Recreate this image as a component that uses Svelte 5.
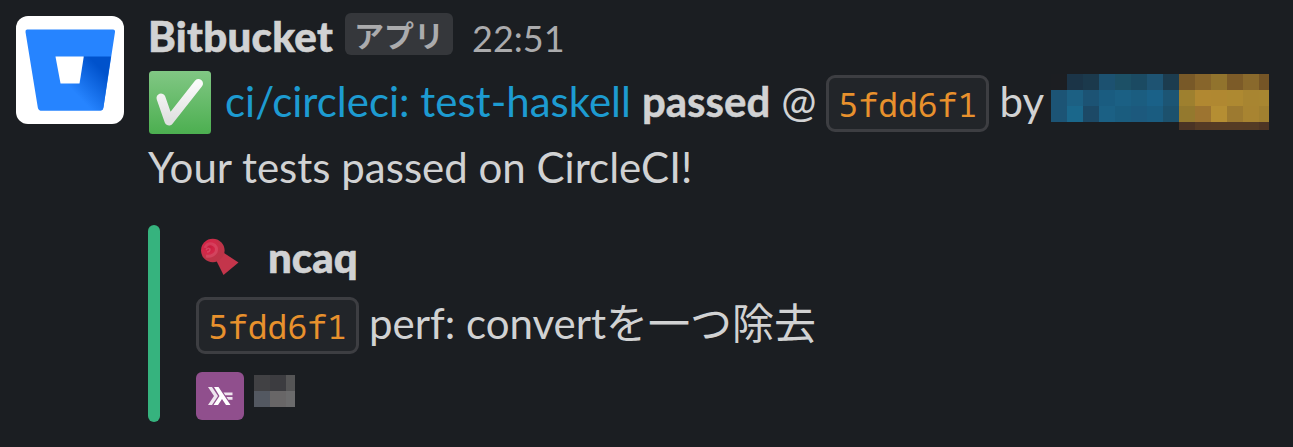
<script>
  const blue = [
    ['#1c1e22', '#1b3447', '#1b394c', '#1c5170', '#1c5066', '#1b4a62', '#1e5372', '#1c3c4f'],
    ['#1c5475', '#1c6083', '#1c5374', '#1a5c80', '#1b6084', '#1b5d80', '#1a6188', '#1c5574'],
    ['#1c5475', '#1a678b', '#1c4966', '#1b6084', '#1a5c7e', '#1c597d', '#1a5c80', '#1c516d']
  ];
  const gold = [
    ['#785928', '#87652b', '#91732d', '#7c5b28', '#89692c', '#755526'],
    ['#9e802f', '#b18831', '#b08831', '#ae8931', '#a88531', '#a88631'],
    ['#94792e', '#9d7430', '#b58e33', '#9d7a30', '#a88431', '#a18030'],
    ['#4a3325', '#553a25', '#553b25', '#553b25', '#543b25', '#4e3525']
  ];
  const gray = [['#414144', '#3c3c40', '#555556'], ['#535861', '#686667', '#6b6b6c']];
</script>

{#snippet mosaic(rows, kind)}
  <svg class="mosaic {kind}" shape-rendering="crispEdges" aria-hidden="true">
    {#each rows as row, y}
      {#each row as color, x}
        <rect x={x * 16} y={y * 16} width="16" height="16" fill={color} />
      {/each}
    {/each}
  </svg>
{/snippet}

<main>
  <svg class="avatar" viewBox="0 0 108 108">
    <defs>
      <linearGradient id="fold" x1="88" y1="45" x2="57" y2="75" gradientUnits="userSpaceOnUse">
        <stop offset=".18" stop-color="#0052cc" /><stop offset="1" stop-color="#2684ff" />
      </linearGradient>
    </defs>
    <rect width="108" height="108" rx="12" fill="#fff" />
    <path d="M11 13.5h86q2.300 0 2 2.500L87.500 91q-.5 3.500-3 3.500H25q-2.700 0-3.200-3L9.500 16q-.3-2.500 1.500-2.500Z" fill="#2684ff" />
    <path d="M67 40.500h28L87.500 91q-.5 3.500-3 3.500H25q-1 0-1.600-.5L45 67h19Z" fill="url(#fold)" />
    <path d="M39.500 40.500H67.800L63.500 67.500H44.500Z" fill="#fff" />
  </svg>
  <section class="body">
    <header class="row">
      <b class="name">Bitbucket</b><span class="badge">アプリ</span><span class="time">22:51</span>
    </header>
    <div class="row status">
      <svg class="check" viewBox="0 0 62 63">
        <defs>
          <linearGradient id="green" x2="0" y2="1"><stop stop-color="#81c784" /><stop offset="1" stop-color="#4caf50" /></linearGradient>
          <linearGradient id="tick" x2="0" y2="1"><stop stop-color="#fafafa" /><stop offset="1" stop-color="#e0e0e0" /></linearGradient>
        </defs>
        <rect width="62" height="63" rx="3.500" fill="url(#green)" />
        <path d="M12 27 20 50 49.500 12.500" fill="none" stroke="url(#tick)" stroke-width="9" stroke-linecap="round" stroke-linejoin="round" />
      </svg>
      <span class="link">ci/circleci: test-haskell</span>
      <b class="passed">passed</b><span class="at">@</span>
      <code>5fdd6f1</code><span class="by">by</span>
      {@render mosaic(blue, 'blue')}{@render mosaic(gold, 'gold')}
    </div>
    <div class="row"><span class="tests">Your tests passed on CircleCI!</span></div>
    <div class="attachment">
      <div class="bar"></div>
      <div class="content">
        <div class="row author">
          <svg class="pin" viewBox="0 0 40 40">
            <defs><radialGradient id="ball" cx=".35" cy=".35"><stop stop-color="#c8193c" /><stop offset=".55" stop-color="#d32849" /><stop offset="1" stop-color="#bd3448" /></radialGradient></defs>
            <path d="M16 22 24 15 38.500 24.500 23.500 37Z" fill="#c4354b" />
            <circle cx="12.800" cy="12.500" r="11.800" fill="url(#ball)" />
            <path d="M5 10Q7 5 12 6 18 8 16 14 13 19 6 18" fill="none" stroke="#df667d" stroke-width="3" opacity=".4" />
            <path d="M6 12Q8 9 10 11 10 14 7 14" fill="none" stroke="#df667d" stroke-width="1.500" opacity=".5" />
          </svg>
          <b class="ncaq">ncaq</b>
        </div>
        <div class="row"><code>5fdd6f1</code><span class="commit">perf: convertを一つ除去</span></div>
        <footer>
          <svg class="repo" viewBox="0 0 48 48">
            <rect width="48" height="48" rx="6" fill="#904f8d" />
            <g fill="#fff"><path d="M12 15h4l6 9-6 9h-4l6-9Z" opacity=".85" /><path d="M18 15h4.500l12 18H30l-4-6-4 6h-4.500l6-9Z" /><path d="M27.500 20.500h9v2.700h-7.200ZM30.500 25h6v2.700h-4.200Z" opacity=".85" /></g>
          </svg>
          {@render mosaic(gray, 'gray')}
        </footer>
      </div>
    </div>
  </section>
</main>

<style>
  :global(body) { margin: 0; background: #1b1e22; }
  main { box-sizing: border-box; width: 1293px; height: 447px; overflow: hidden; display: flex; padding-left: 16px; background: #1b1e22; color: #d1d2d3; font: 42px/66px Lato, "Noto Sans CJK JP", sans-serif; }
  svg { display: block; flex: none; }
  .avatar { width: 108px; height: 108px; margin-top: 16px; }
  .body { margin-left: 25px; padding-top: 3px; }
  .row { display: flex; height: 66px; white-space: nowrap; }
  b { font-weight: 900; }
  .name { margin-left: -1px; letter-spacing: .3px; -webkit-text-stroke: .6px; }
  .badge { box-sizing: border-box; width: 108px; height: 42px; margin: 10px 0 0 12px; border-radius: 6px; background: #35373b; color: #ababad; text-align: center; font: 700 30px/42px "Noto Sans CJK JP", sans-serif; }
  .time { margin-left: 19px; color: #ababad; font-size: 36px; line-height: 70px; }
  .check { width: 62px; height: 63px; margin-top: 2px; }
  .link { margin-left: 14px; color: #1d9bd1; line-height: 65px; }
  .passed { margin-left: 11px; font-weight: 700; line-height: 65px; -webkit-text-stroke: .5px; }
  .at { margin-left: 11px; margin-right: -1px; line-height: 65px; }
  code { box-sizing: border-box; width: 163px; height: 57px; margin: 6px 0 0 11px; border: 3px solid #3d3e42; border-radius: 9px; background: #222529; color: #e8912d; text-align: center; font: 33px/53px "Noto Sans Mono", "DejaVu Sans Mono", monospace; }
  .by { margin-left: 10px; line-height: 65px; }
  .mosaic.blue { width: 128px; height: 48px; margin: 5px 0 0 7px; }
  .mosaic.gold { width: 90px; height: 56px; margin-top: 5px; }
  .tests { margin-left: -1px; line-height: 65px; }
  .attachment { display: flex; height: 197px; margin-top: 24px; }
  .bar { width: 12px; margin-left: -1px; border-radius: 6px; background: #36b37e; }
  .content { margin-left: 36px; }
  .content code { margin-left: 0; }
  .pin { width: 40px; height: 40px; margin: 13px 0 0 4px; }
  .ncaq { margin-left: 28px; line-height: 65px; -webkit-text-stroke: .6px; }
  .commit { margin-left: 10px; line-height: 65px; }
  footer { display: flex; margin-top: 15px; }
  .repo { width: 48px; height: 48px; }
  .mosaic.gray { width: 41px; height: 32px; margin: 3px 0 0 10px; }
</style>
